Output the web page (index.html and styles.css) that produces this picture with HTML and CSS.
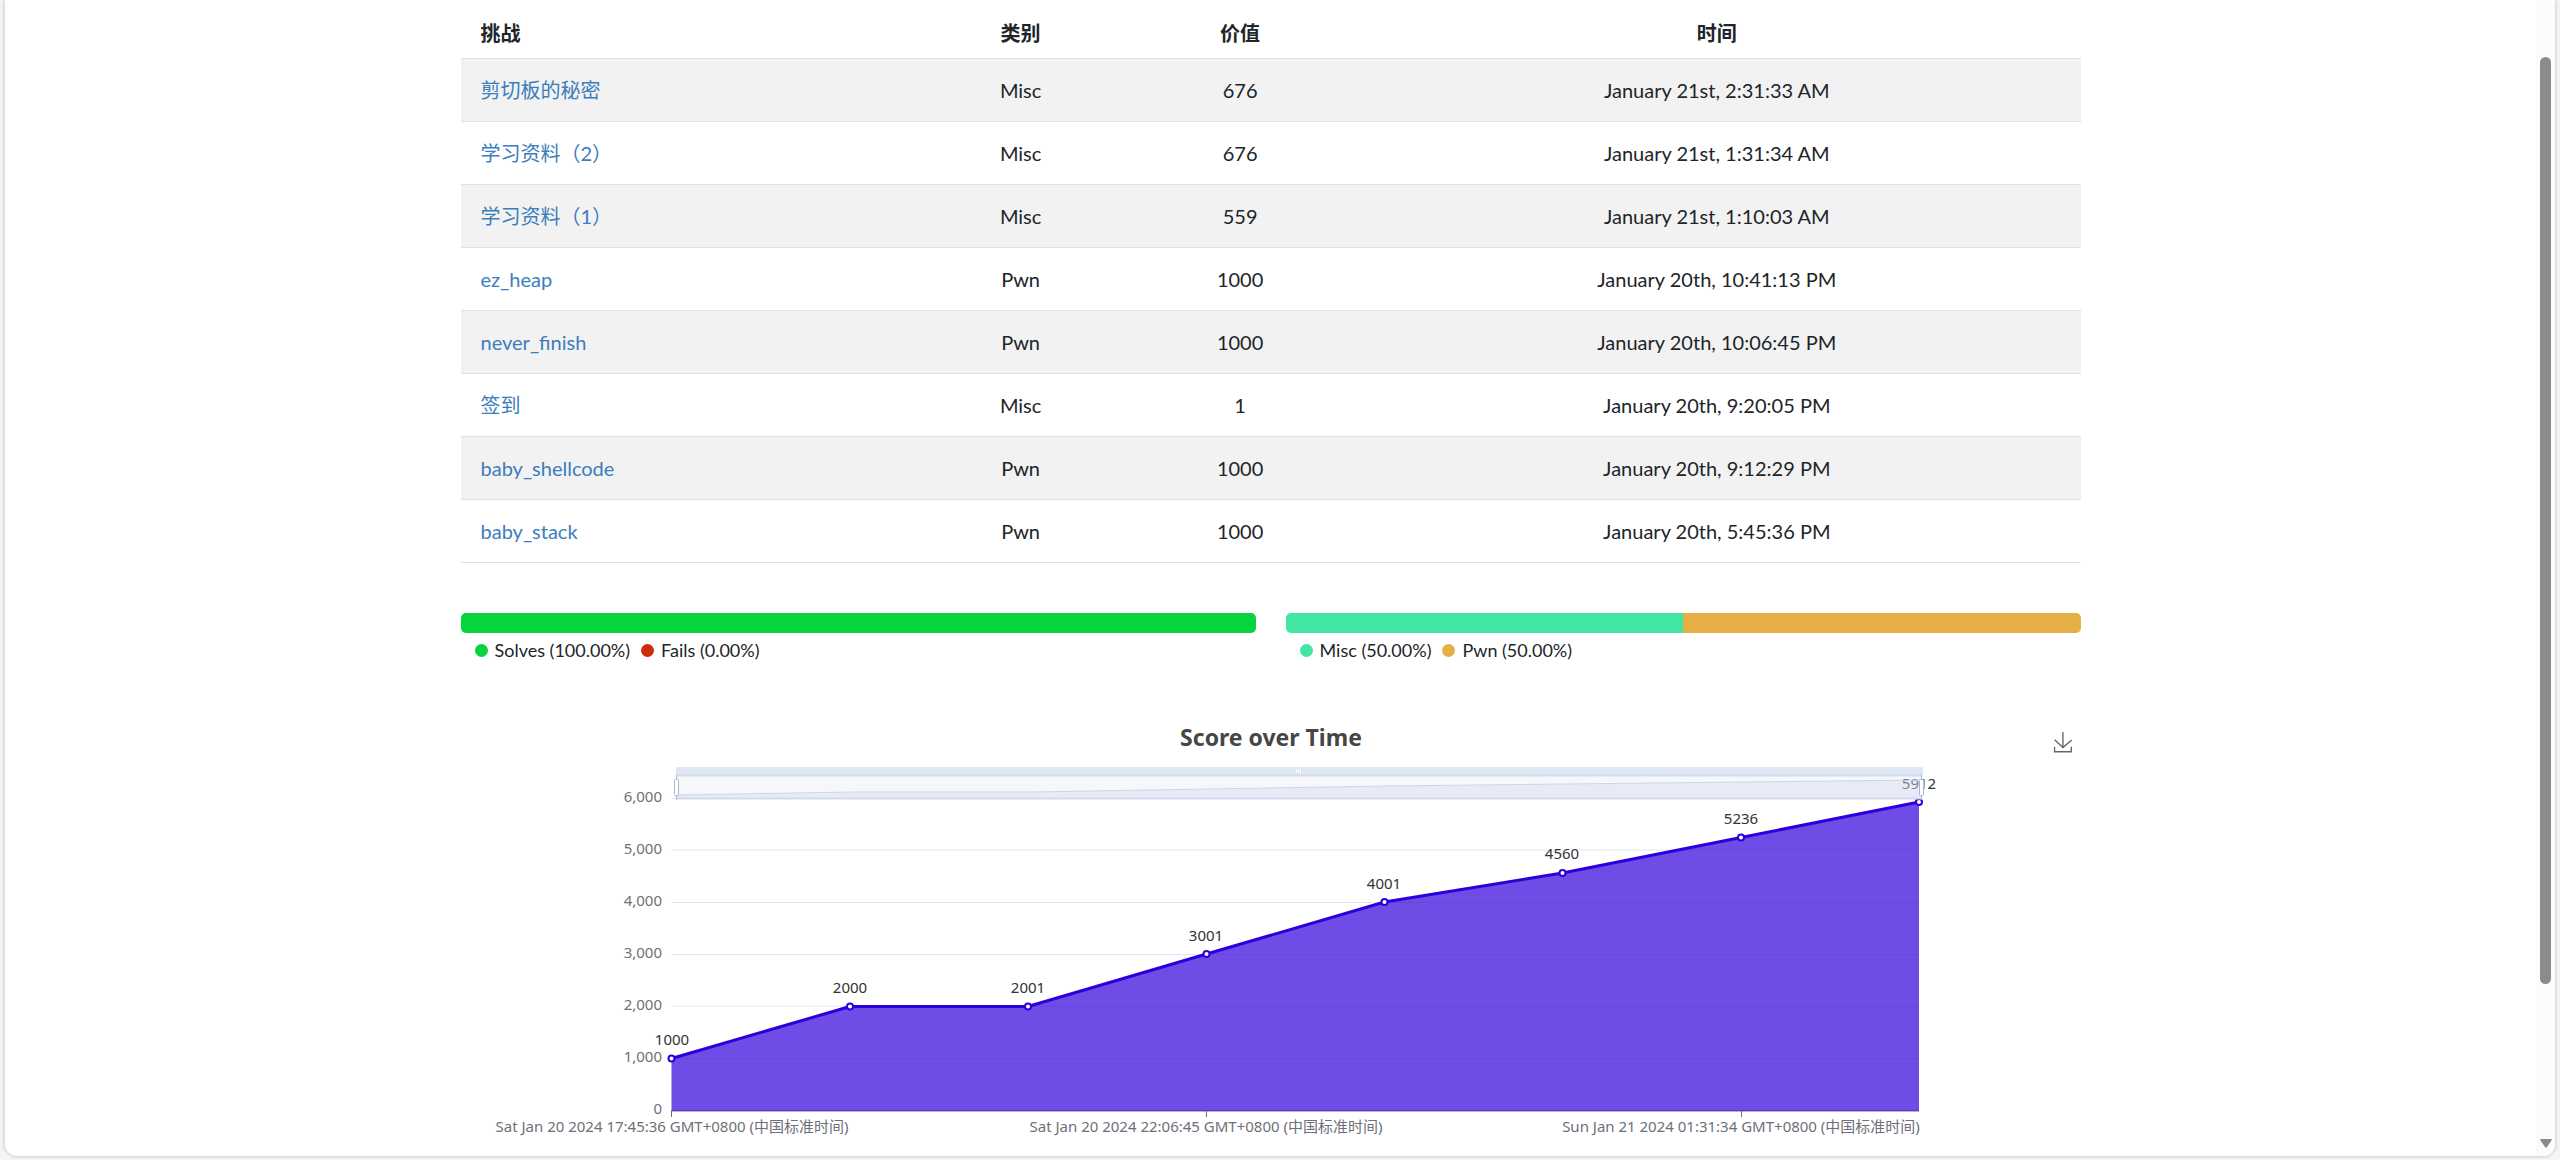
FILE: index.html
```html
<!DOCTYPE html>
<html lang="zh-CN">
<head>
<meta charset="utf-8">
<title>Score over Time</title>
<link rel="stylesheet" href="styles.css">
</head>
<body>
<div class="panel">
  <main class="content">
    <div class="container">
      <table class="solves">
        <colgroup><col class="col-name"><col class="col-category"><col class="col-value"><col class="col-time"></colgroup>
        <thead>
          <tr><th scope="col">挑战</th><th scope="col">类别</th><th scope="col">价值</th><th scope="col">时间</th></tr>
        </thead>
        <tbody>
          <tr><td><a href="#">剪切板的秘密</a></td><td>Misc</td><td>676</td><td>January 21st, 2:31:33 AM</td></tr>
          <tr><td><a href="#">学习资料（2）</a></td><td>Misc</td><td>676</td><td>January 21st, 1:31:34 AM</td></tr>
          <tr><td><a href="#">学习资料（1）</a></td><td>Misc</td><td>559</td><td>January 21st, 1:10:03 AM</td></tr>
          <tr><td><a href="#">ez_heap</a></td><td>Pwn</td><td>1000</td><td>January 20th, 10:41:13 PM</td></tr>
          <tr><td><a href="#">never_finish</a></td><td>Pwn</td><td>1000</td><td>January 20th, 10:06:45 PM</td></tr>
          <tr><td><a href="#">签到</a></td><td>Misc</td><td>1</td><td>January 20th, 9:20:05 PM</td></tr>
          <tr><td><a href="#">baby_shellcode</a></td><td>Pwn</td><td>1000</td><td>January 20th, 9:12:29 PM</td></tr>
          <tr><td><a href="#">baby_stack</a></td><td>Pwn</td><td>1000</td><td>January 20th, 5:45:36 PM</td></tr>
        </tbody>
      </table>

      <div class="breakdowns">
        <section class="breakdown">
          <div class="bar"><span class="solve" style="width:100%"></span></div>
          <ul class="legend">
            <li><i class="dot solve"></i>Solves (100.00%)</li>
            <li><i class="dot fail"></i>Fails (0.00%)</li>
          </ul>
        </section>
        <section class="breakdown">
          <div class="bar"><span class="misc" style="width:50%"></span><span class="pwn" style="width:50%"></span></div>
          <ul class="legend">
            <li><i class="dot misc"></i>Misc (50.00%)</li>
            <li><i class="dot pwn"></i>Pwn (50.00%)</li>
          </ul>
        </section>
      </div>

      <svg class="chart" viewBox="0 0 1620 440" role="img" aria-label="Score over Time">
        <text class="chart-title" x="810" y="46">Score over Time</text>
        <g class="download" transform="translate(1592 32) scale(.34)">
          <path d="M4.7,22.9L29.3,45.5L54.7,23.4M4.6,43.6L4.6,58L53.8,58L53.8,43.6M29.2,45.1L29.2,0"/>
        </g>

        <!-- grid and axes -->
        <path class="grid" d="M210 98.5H1458M210 150H1458M210 202.5H1458M210 254.5H1458M210 306H1458M210 358.500H1458"/>
        <g class="axis-y">
          <text x="201" y="102">6,000</text>
          <text x="201" y="154">5,000</text>
          <text x="201" y="206">4,000</text>
          <text x="201" y="258">3,000</text>
          <text x="201" y="310">2,000</text>
          <text x="201" y="362">1,000</text>
          <text x="201" y="414">0</text>
        </g>
        <path class="axis" d="M210 411H1458M210.500 411V417M745.500 411V417M1280.500 411V417"/>
        <g class="axis-x">
          <text x="211" y="432">Sat Jan 20 2024 17:45:36 GMT+0800 (中国标准时间)</text>
          <text x="745" y="432">Sat Jan 20 2024 22:06:45 GMT+0800 (中国标准时间)</text>
          <text x="1280" y="432">Sun Jan 21 2024 01:31:34 GMT+0800 (中国标准时间)</text>
        </g>

        <!-- score series -->
        <path class="area" d="M210.500 358.500L389 306.500H567L745.500 254L923.500 202L1101.500 173L1280 137.500L1458 102V411H210.500Z"/>
        <path class="line" d="M210.500 358.500L389 306.500H567L745.500 254L923.500 202L1101.500 173L1280 137.500L1458 102"/>
        <g class="points">
          <circle cx="210.500" cy="358.500" r="3"/><circle cx="389" cy="306.500" r="3"/><circle cx="567" cy="306.500" r="3"/><circle cx="745.500" cy="254" r="3"/><circle cx="923.500" cy="202" r="3"/><circle cx="1101.500" cy="173" r="3"/><circle cx="1280" cy="137.500" r="3"/><circle cx="1458" cy="102" r="3"/>
        </g>
        <g class="values">
          <text x="211" y="345">1000</text><text x="389" y="293">2000</text><text x="567" y="293">2001</text><text x="745" y="241">3001</text>
          <text x="923" y="189">4001</text><text x="1101" y="159">4560</text><text x="1280" y="124">5236</text><text x="1458" y="89">5912</text>
        </g>

        <!-- zoom range slider -->
        <rect class="range-move" x="215" y="67" width="1247" height="8" rx="1"/>
        <rect class="range-body" x="215" y="75" width="1247" height="24"/>
        <path class="range-area" d="M215 95L393 92H571L749 89L927 86L1105 84L1284 82L1461 80V98H215Z"/>
        <path class="range-line" d="M215 95L393 92H571L749 89L927 86L1105 84L1284 82L1461 80"/>
        <path class="range-edge" d="M215 75.500H1461M215 98.500H1461"/>
        <path class="range-grip" d="M835.500 69V73M837.500 69V73M839.500 69V73"/>
        <path class="range-stem" d="M215.500 75V100M1460.500 75V100"/>
        <rect class="range-handle" x="213.500" y="79.500" width="4" height="16" rx="1"/>
        <rect class="range-handle" x="1458.500" y="79.500" width="4" height="16" rx="1"/>
      </svg>
    </div>
  </main>
  <div class="scrollbar" aria-hidden="true">
    <span class="thumb"></span>
    <svg class="arrow" viewBox="0 0 12 9"><path d="M1 0H11Q12.500 0 11.500 1.500L7 8Q6 9 5 8L.5 1.500Q-.5 0 1 0Z"/></svg>
  </div>
</div>
</body>
</html>
```
FILE: styles.css
```css
* { box-sizing: border-box; }

body {
  margin: 0;
  padding: 0 5px 3px;
  background: #f5f5f5;
  color: #212529;
  font: 20px/30px Lato, "Noto Sans CJK SC", sans-serif;
}

.panel {
  display: flex;
  background: #fff;
  border-radius: 0 0 12px 12px;
  box-shadow: 0 0 4px rgba(0, 0, 0, .25);
  overflow: hidden;
}

.content {
  flex: 1;
  min-width: 0;
  padding: 8px 16px 16px;
}

.container {
  max-width: 1620px;
  margin: 0 auto;
}

/* Solves table */
.solves {
  width: 100%;
  table-layout: fixed;
  border-collapse: collapse;
  text-align: center;
}

.col-name { width: 28%; }
.col-category { width: 213px; }
.col-value { width: 226px; }

.solves th,
.solves td {
  padding: 16px 20px;
  border-bottom: 1px solid #dee2e6;
}

.solves th { padding: 10px 20px; }

.solves th:first-child,
.solves td:first-child { text-align: left; }

.solves tbody tr:nth-child(odd) { background: #f2f2f2; }

.solves a {
  color: #3b7dbd;
  text-decoration: none;
}

/* Percentage bars */
.breakdowns {
  display: grid;
  grid-template-columns: 1fr 1fr;
  gap: 30px;
  margin-top: 50px;
}

.bar {
  display: flex;
  height: 20px;
  border-radius: 5px;
  overflow: hidden;
}

.legend {
  display: flex;
  gap: 11px;
  margin: 0;
  padding: 2px 14px;
  list-style: none;
  font-size: 18px;
}

.legend li {
  display: flex;
  align-items: center;
  gap: 7px;
}

.dot {
  width: 13px;
  height: 13px;
  border-radius: 50%;
}

.solve { background: #05d43f; }
.fail { background: #cf2c0e; }
.misc { background: #41e5a4; }
.pwn { background: #e6af46; }

/* Chart */
.chart {
  display: block;
  width: 100%;
  height: auto;
  margin-top: 33px;
  font-family: "Noto Sans", "Noto Sans CJK SC", sans-serif;
  font-size: 15px;
}

.chart-title {
  fill: #464646;
  font-size: 23px;
  font-weight: 700;
  text-anchor: middle;
}

.download { fill: none; stroke: #666; stroke-width: 4; }
.grid { fill: none; stroke: #e0e6f1; stroke-width: 1; }
.axis { fill: none; stroke: #6e7079; stroke-width: 1; }
.axis-x, .axis-y { fill: #6e7079; }
.axis-x { text-anchor: middle; }
.axis-y { text-anchor: end; }
.values { fill: #333; text-anchor: middle; }
.area { fill: #3200da; fill-opacity: .7; }
.line { fill: none; stroke: #2b00dc; stroke-width: 3; stroke-linejoin: bevel; }
.points { fill: #fff; stroke: #2b00dc; stroke-width: 2; }

.range-move { fill: #d2dbee; fill-opacity: .7; }
.range-body { fill: #dcdfe9; fill-opacity: .25; }
.range-area { fill: #c8d2f0; fill-opacity: .3; }
.range-line { fill: none; stroke: #c9d6f3; }
.range-edge { fill: none; stroke: #d2dbee; stroke-width: 2; }
.range-grip { fill: none; stroke: #fff; }
.range-stem { fill: none; stroke: #acb8d1; }
.range-handle { fill: #fff; stroke: #acb8d1; }

/* Scrollbar */
.scrollbar {
  display: flex;
  flex-direction: column;
  align-items: center;
  justify-content: space-between;
  width: 19px;
  padding: 57px 0 8px;
  background: #fcfcfc;
}

.thumb {
  width: 11px;
  height: 85%;
  border-radius: 6px;
  background: #8b8b8b;
}

.arrow { width: 12px; height: 9px; fill: #8b8b8b; }
```
